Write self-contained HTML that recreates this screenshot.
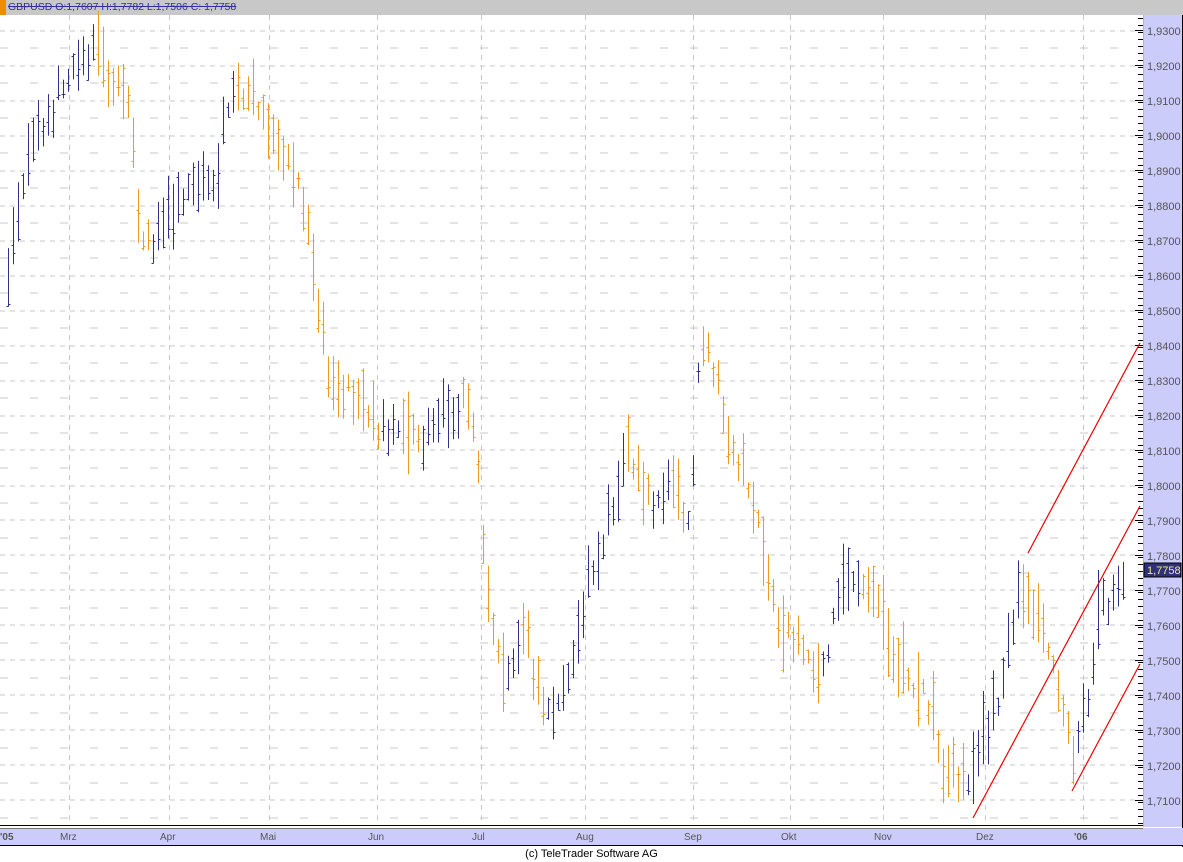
<!DOCTYPE html>
<html><head><meta charset="utf-8"><style>
html,body{margin:0;padding:0;background:#fff;}
body{width:1183px;height:862px;position:relative;overflow:hidden;font-family:"Liberation Sans",sans-serif;}
#top{position:absolute;left:0;top:0;width:1183px;height:15px;background:#c8c8c8;}
#top .o{position:absolute;left:0;top:0;width:6px;height:15px;background:#f08c00;}
#top .t{position:absolute;left:8px;top:1px;font-size:10.5px;color:#3030a0;text-decoration:line-through;}
#foot{position:absolute;left:0;top:848px;width:1183px;text-align:center;font-size:11px;color:#000;}
svg{position:absolute;left:0;top:0;}
</style></head><body>
<div id="top"><div class="o"></div><div class="t">GBPUSD O:1,7607 H:1,7782 L:1,7506 C: 1,7758</div></div>
<svg id="s" width="1183" height="848" xmlns="http://www.w3.org/2000/svg">
<rect x="1143" y="15" width="40" height="812" fill="#ccccfa"/>
<line x1="1143.5" y1="15" x2="1143.5" y2="827" stroke="#f0b040"/>
<line x1="1182.5" y1="15" x2="1182.5" y2="847" stroke="#000"/>
<rect x="0" y="828" width="1183" height="17" fill="#ccccfa"/>
<line x1="0" y1="825.5" x2="1143" y2="825.5" stroke="#000"/>
<line x1="0" y1="828.5" x2="1143" y2="828.5" stroke="#777"/>
<line x1="0" y1="845.5" x2="1183" y2="845.5" stroke="#000"/>
<g id="grid"></g><g id="bars"></g><g id="ax"></g>
<g stroke="#ee0000" stroke-width="1.2">
<line x1="1028" y1="553" x2="1140" y2="343"/>
<line x1="973" y1="818" x2="1140" y2="506"/>
<line x1="1072" y1="791" x2="1140" y2="664"/>
</g>
<rect x="1144" y="563" width="37" height="14" fill="#30307a" stroke="#000"/>
<text x="1147" y="574" font-size="11" fill="#f0f080" font-family="Liberation Sans">1,7758</text>
</svg>
<div id="foot">(c) TeleTrader Software AG</div>
<script>
const NS="http://www.w3.org/2000/svg";
function el(p,t,a,txt){const e=document.createElementNS(NS,t);for(const k in a)e.setAttribute(k,a[k]);if(txt)e.textContent=txt;p.appendChild(e);return e;}
const Y=p=>30+(1.93-p)*3500;
const grid=document.getElementById('grid'),ax=document.getElementById('ax'),bars=document.getElementById('bars');
const mx=[[3,"'05"],[69,"Mrz"],[169,"Apr"],[269,"Mai"],[377,"Jun"],[481,"Jul"],[585,"Aug"],[693,"Sep"],[790,"Okt"],[883,"Nov"],[985,"Dez"],[1083,"'06"]];
for(let i=0;i<=45;i++){const y=Math.round(Y(1.93-i*0.005)+0.5)-0.5;if(y<16||y>824)continue;
 el(grid,'line',{x1:0,y1:y+0.5,x2:1141,y2:y+0.5,stroke:'#c8c8c8','stroke-dasharray':i%2?'8,22':'5,5'});}
mx.forEach(([x,l],i)=>{if(i>0)el(grid,'line',{x1:x+0.5,y1:15,x2:x+0.5,y2:825,stroke:'#c8c8c8','stroke-dasharray':'5,5'});
 el(ax,'text',{x:x===3?0:x-9,y:840,'font-size':10,fill:'#555','font-weight':x===3||x===1083?'bold':'normal'},l);});
for(let i=0;i<=22;i++){const p=1.93-i*0.01;const y=Y(p);
 el(ax,'text',{x:1147,y:y+5,'font-size':11,fill:'#555'},p.toFixed(4).replace('.',','));}
for(let y=18;y<825;y+=7){el(ax,'line',{x1:1138,y1:y+0.5,x2:1143,y2:y+0.5,stroke:'#000'});}
for(let i=0;i<=22;i++){const y=Math.round(Y(1.93-i*0.01));el(ax,'line',{x1:1135,y1:y+0.5,x2:1143,y2:y+0.5,stroke:'#000'});}
const kp=[[8,1.86],[25,1.89],[55,1.91],[95,1.925],[130,1.905],[140,1.875],[150,1.868],[180,1.88],[215,1.89],[235,1.915],[260,1.91],[280,1.895],[300,1.885],[315,1.86],[325,1.835],[350,1.825],[380,1.815],[400,1.82],[420,1.812],[440,1.822],[465,1.825],[475,1.81],[482,1.79],[490,1.76],[505,1.74],[520,1.76],[545,1.735],[570,1.745],[585,1.77],[600,1.78],[625,1.81],[650,1.795],[675,1.80],[690,1.785],[700,1.845],[715,1.83],[735,1.81],[760,1.79],[775,1.765],[800,1.755],[820,1.745],[840,1.77],[865,1.775],[885,1.76],[905,1.745],[925,1.74],[945,1.72],[970,1.715],[985,1.73],[1000,1.74],[1020,1.77],[1045,1.76],[1060,1.74],[1075,1.72],[1090,1.745],[1100,1.765],[1125,1.77]];
function f(x){for(let i=0;i<kp.length-1;i++){const[a,pa]=kp[i],[b,pb]=kp[i+1];if(x<=b)return pa+(pb-pa)*(x-a)/(b-a);}return kp[kp.length-1][1];}
let s=12345;const r=()=>{s=(s*16807)%2147483647;return s/2147483647;};
for(let x=8;x<=1126;x+=5){
 const m=f(x)+(r()-0.5)*0.008;const h=0.004+r()*0.012;
 const hi=m+h*(0.4+r()*0.4),lo=m-h*(0.4+r()*0.4);
 const o=lo+(hi-lo)*r(),c=lo+(hi-lo)*r();
 const col=f(x+4)>=f(x-4)?'#303088':'#f09a20';
 const X=x+0.5;
 el(bars,'line',{x1:X,y1:Y(hi),x2:X,y2:Y(lo),stroke:col});
 el(bars,'line',{x1:X-2,y1:Math.round(Y(o))+0.5,x2:X,y2:Math.round(Y(o))+0.5,stroke:col});
 el(bars,'line',{x1:X,y1:Math.round(Y(c))+0.5,x2:X+2,y2:Math.round(Y(c))+0.5,stroke:col});
}
</script>
</body></html>
